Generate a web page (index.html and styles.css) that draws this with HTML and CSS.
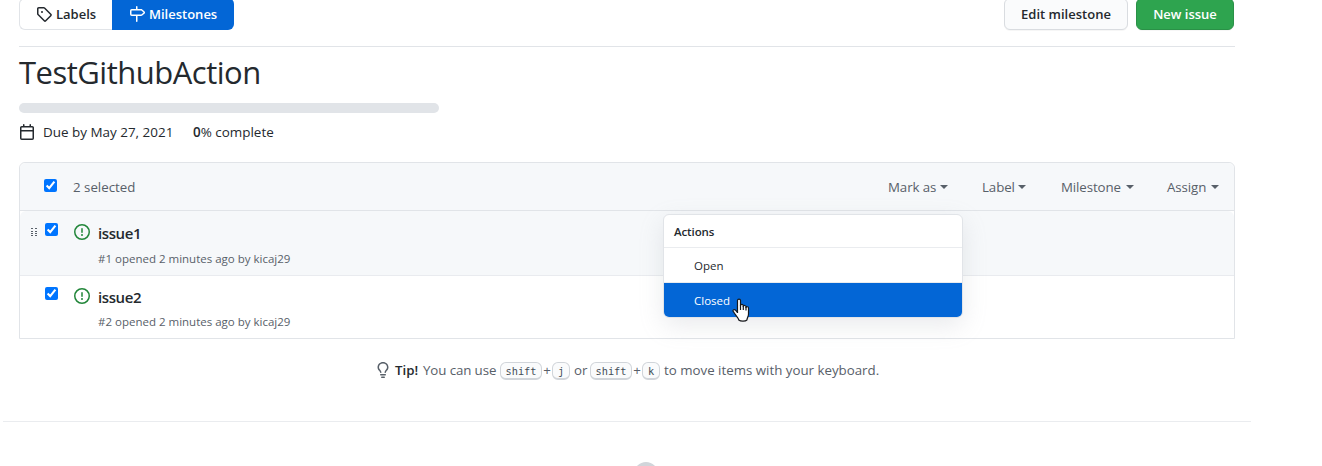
FILE: index.html
```html
<!DOCTYPE html>
<html lang="en">
<head>
<meta charset="utf-8">
<title>TestGithubAction</title>
<link rel="stylesheet" href="styles.css">
</head>
<body>
<main class="content">
  <header class="topbar">
    <nav class="subnav">
      <a class="tab tab-labels"><svg width="16" height="16" viewBox="0 0 16 16"><path fill-rule="evenodd" d="M2.5 7.775V2.75a.25.25 0 01.25-.25h5.025a.25.25 0 01.177.073l6.25 6.25a.25.25 0 010 .354l-5.025 5.025a.25.25 0 01-.354 0l-6.25-6.25a.25.25 0 01-.073-.177zm-1.5 0V2.75C1 1.784 1.784 1 2.75 1h5.025c.464 0 .91.184 1.238.513l6.25 6.25a1.75 1.75 0 010 2.474l-5.026 5.026a1.75 1.75 0 01-2.474 0l-6.25-6.25A1.75 1.75 0 011 7.775zM6 5a1 1 0 100 2 1 1 0 000-2z"/></svg><span>Labels</span></a>
      <a class="tab tab-milestones"><svg width="16" height="16" viewBox="0 0 16 16"><path fill-rule="evenodd" d="M7.75 0a.75.75 0 01.75.75V3h3.634c.414 0 .814.147 1.13.414l2.07 1.75a1.75 1.75 0 010 2.672l-2.07 1.75a1.75 1.75 0 01-1.13.414H8.5v5.25a.75.75 0 11-1.5 0V10H2.75A1.75 1.75 0 011 8.25v-3.500A1.75 1.75 0 012.750 3H7V.75A.75.75 0 017.750 0zm0 8.500h4.384a.25.25 0 00.161-.06l2.070-1.750a.25.25 0 000-.380l-2.070-1.750a.25.25 0 00-.161-.060H2.750a.25.25 0 00-.25.25v3.500c0 .138.112.25.25.25h5z"/></svg><span>Milestones</span></a>
    </nav>
    <div class="actions">
      <button class="btn btn-edit"><span>Edit milestone</span></button>
      <button class="btn btn-new"><span>New issue</span></button>
    </div>
  </header>

  <h1 class="title">TestGithubAction</h1>
  <div class="progress"></div>
  <div class="stats">
    <svg width="16" height="16" viewBox="0 0 16 16"><path fill-rule="evenodd" d="M4.750 0a.75.75 0 01.75.75V2h5V.75a.75.75 0 011.500 0V2h1.250c.966 0 1.750.784 1.750 1.750v10.500A1.750 1.750 0 0113.250 16H2.750A1.750 1.750 0 011 14.250V3.750C1 2.784 1.784 2 2.750 2H4V.75A.75.75 0 014.750 0zm0 3.500h-2a.25.25 0 00-.25.25V6h11V3.750a.25.25 0 00-.25-.25h-8.500zM2.500 7.500v6.750c0 .138.112.25.25.25h10.500a.25.25 0 00.25-.25V7.500h-11z"/></svg>
    <span class="due">Due by May 27, 2021</span>
    <span class="complete"><b>0</b>% complete</span>
  </div>

  <section class="box">
    <div class="box-header">
      <input class="check" type="checkbox" checked>
      <span class="selected">2 selected</span>
      <div class="filters">
        <span class="filter mark">Mark as</span>
        <span class="filter label">Label</span>
        <span class="filter mile">Milestone</span>
        <span class="filter assign">Assign</span>
      </div>
    </div>
    <div class="row row-hover">
      <svg class="grip" width="7" height="10" viewBox="0 0 7 10"><path d="M0 0h2v1H0zM4 0h2v1H4zM0 3h2v1H0zM4 3h2v1H4zM0 5h2v1H0zM4 5h2v1H4zM0 7h2v1H0zM4 7h2v1H4z"/></svg>
      <input class="check" type="checkbox" checked>
      <svg class="open-icon" width="16" height="16" viewBox="0 0 16 16"><path fill-rule="evenodd" d="M8 1.500a6.500 6.500 0 100 13 6.500 6.500 0 000-13zM0 8a8 8 0 1116 0A8 8 0 010 8zm9 3a1 1 0 11-2 0 1 1 0 012 0zm-.25-6.250a.75.75 0 00-1.500 0v3.500a.75.75 0 001.500 0v-3.500z"/></svg>
      <div class="issue"><a class="issue-title">issue1</a><span class="meta">#1 opened 2 minutes ago by kicaj29</span></div>
    </div>
    <div class="row">
      <span class="grip"></span>
      <input class="check" type="checkbox" checked>
      <svg class="open-icon" width="16" height="16" viewBox="0 0 16 16"><path fill-rule="evenodd" d="M8 1.500a6.500 6.500 0 100 13 6.500 6.500 0 000-13zM0 8a8 8 0 1116 0A8 8 0 010 8zm9 3a1 1 0 11-2 0 1 1 0 012 0zm-.25-6.250a.75.75 0 00-1.500 0v3.500a.75.75 0 001.500 0v-3.500z"/></svg>
      <div class="issue"><a class="issue-title">issue2</a><span class="meta">#2 opened 2 minutes ago by kicaj29</span></div>
    </div>
    <div class="menu">
      <div class="menu-title">Actions</div>
      <div class="menu-item">Open</div>
      <div class="menu-item active">Closed</div>
      <svg class="cursor" width="18" height="24" viewBox="0 0 18 24"><path d="M5.500 15V2.500C5.500.7 8.500.7 8.500 2.500V7.500C8.500 6 11.200 6 11.300 7.700V8.500C11.500 7 13.900 7.200 14 8.700V9.500C14.200 8.300 16.500 8.500 16.500 10V16C16.500 18.500 15.300 19.500 14.900 22C13.500 23.500 8.500 23.500 6.800 22C6.300 19.800 4.200 18 3 16L1.200 13.400C.3 11.700 2.400 10.900 3.500 12.200L5.500 14.500"/><path d="M8.500 7v5M11.300 8v4M14 9v3.500"/></svg>
    </div>
  </section>

  <p class="tip">
    <svg width="16" height="16" viewBox="0 0 16 16"><path fill-rule="evenodd" d="M8 1.500c-2.363 0-4 1.690-4 3.750 0 .984.424 1.625.984 2.304l.214.253c.223.264.470.556.673.848.284.411.537.896.621 1.490a.75.75 0 01-1.484.211c-.04-.282-.163-.547-.370-.847a8.695 8.695 0 00-.542-.680c-.084-.1-.173-.205-.268-.320C3.201 7.750 2.500 6.766 2.500 5.250 2.500 2.310 4.863 0 8 0s5.500 2.310 5.500 5.250c0 1.516-.701 2.500-1.328 3.259-.095.115-.184.220-.268.319-.207.245-.383.453-.541.681-.208.300-.330.565-.370.847a.75.75 0 01-1.485-.212c.084-.593.337-1.078.621-1.489.203-.292.450-.584.673-.848.075-.088.147-.173.213-.253.561-.679.985-1.320.985-2.304 0-2.060-1.637-3.750-4-3.750zM6 15.250a.75.75 0 01.75-.75h2.500a.75.75 0 010 1.500h-2.500a.75.75 0 01-.75-.75zM5.750 12a.75.75 0 000 1.500h4.500a.75.75 0 000-1.500h-4.500z"/></svg>
    <strong>Tip!</strong><span class="t-use">You can use</span><kbd class="wide">shift</kbd><span class="plus">+</span><kbd>j</kbd><span class="t-or">or</span><kbd class="wide">shift</kbd><span class="plus">+</span><kbd>k</kbd><span class="t-move">to move items with your keyboard.</span>
  </p>
</main>
<footer class="footer"><div class="mark-circle"></div></footer>
</body>
</html>
```
FILE: styles.css
```css
* { box-sizing: border-box; }
body {
  margin: 0;
  height: 466px;
  overflow: hidden;
  background: #fff;
  color: #24292e;
  font: 13.3px/20px "Open Sans", "Noto Sans", sans-serif;
}
svg { flex: none; fill: currentColor; }
span, a, strong { white-space: nowrap; }
.content { width: 1216px; margin-left: 19px; }
.topbar {
  display: flex;
  justify-content: space-between;
  height: 47px;
  padding-right: 1px;
  border-bottom: 1px solid #e1e4e8;
}
.subnav, .actions { display: flex; margin-top: -2px; height: 32px; }
.subnav, .btn { font-weight: 600; font-size: 13px; }
.tab { display: flex; align-items: center; gap: 4px; padding-left: 16px; }
.tab-labels { width: 93px; border: 1px solid #e1e4e8; border-right: 0; border-radius: 6px 0 0 6px; }
.tab-milestones { width: 122px; padding-left: 17px; gap: 4px; background: #0366d6; color: #fff; border-radius: 0 6px 6px 0; }
.actions { gap: 8px; }
.btn {
  height: 32px;
  padding: 0;
  border: 1px solid #d9dce0;
  border-radius: 6px;
  background: #fafbfc;
  color: #24292e;
  font-family: inherit;
  box-shadow: 0 1px 0 rgba(27, 31, 35, 0.04);
}
.btn-edit { width: 124px; }
.btn-new { width: 98px; background: #2ea44f; border-color: #2a9147; color: #fff; }
.title { margin: 6px 0 0; height: 40px; font-size: 31px; line-height: 39px; font-weight: 400; letter-spacing: -0.5px; }
.progress { width: 420px; height: 10px; margin-top: 10px; border-radius: 6px; background: #e1e4e8; }
.stats { display: flex; align-items: center; height: 20px; margin-top: 9px; font-size: 13.45px; }
.due { margin-left: 8px; width: 150px; }
.complete b { font-weight: 600; }
.box { position: relative; height: 177px; margin-top: 20px; border: 1px solid #e1e4e8; border-radius: 6px 6px 0 0; }
.check { width: 13px; height: 13px; margin: 0; accent-color: #0075ff; flex: none; }
.box-header { display: flex; align-items: center; height: 48px; padding: 0 15px 0 24px; background: #f6f8fa; border-bottom: 1px solid #e1e4e8; border-radius: 6px 6px 0 0; color: #586069; }
.box-header .check { margin-top: -3px; }
.selected { margin-left: 16px; }
.filters { display: flex; margin-left: auto; }
.filter { display: flex; align-items: center; justify-content: space-between; letter-spacing: -0.1px; }
.filter::after { content: ""; border: 4px solid transparent; border-top-color: currentColor; border-bottom: 0; }
.mark { width: 60px; }
.label { width: 44px; margin-left: 34px; }
.mile { width: 73px; margin-left: 35px; }
.assign { width: 52px; margin-left: 33px; }
.row { display: flex; align-items: flex-start; height: 63px; }
.row-hover { height: 65px; background: #f6f8fa; border-bottom: 1px solid #e9ebef; border-radius: 6px 6px 0 0; }
.grip { width: 7px; margin: 17px 7px 0 11px; color: #586069; }
.row .check { margin-top: 12px; }
.row:not(.row-hover) .check { margin-top: 11px; }
.open-icon { margin: 13px 8px 0 16px; color: #22863a; }
.row:not(.row-hover) .open-icon { margin-top: 12px; }
.issue { display: flex; flex-direction: column; padding-top: 10px; }
.row:not(.row-hover) .issue { padding-top: 9px; }
.issue-title { font-size: 15px; line-height: 24px; font-weight: 600; letter-spacing: -0.4px; }
.meta { margin-top: 4px; font-size: 11.5px; line-height: 18px; color: #586069; }
.row-hover .meta { margin-top: 5px; }
.menu { position: absolute; left: 643px; top: 51px; width: 300px; height: 104px; border: 1px solid #e1e4e8; border-radius: 6px; background: #fff; box-shadow: 0 8px 24px rgba(149, 157, 165, 0.2); font-size: 11.5px; }
.menu-title { height: 33px; padding: 0 10px; line-height: 33px; font-weight: 600; letter-spacing: -0.1px; border-bottom: 1px solid #eaecef; }
.menu-item { height: 35px; padding-left: 30px; line-height: 35px; border-bottom: 1px solid #eaecef; }
.active { height: 34px; border: 0; background: #0366d6; color: #fff; border-radius: 0 0 5px 5px; }
.cursor { position: absolute; left: 68px; top: 83px; color: #16181b; fill: #fff; stroke: currentColor; stroke-width: 1.2; stroke-linejoin: round; }
.tip { display: flex; align-items: center; height: 20px; margin: 21px 0 0 356px; color: #586069; }
.tip strong { width: 28px; margin-left: 4px; color: #24292e; font-weight: 600; }
.t-use { width: 77px; letter-spacing: -0.1px; }
.t-or { width: 20px; padding-left: 4px; }
.t-move { margin-left: 4px; }
.plus { width: 10px; text-align: center; }
kbd { width: 18px; height: 18px; margin-top: 2px; border: 1px solid #d1d5da; border-bottom-width: 2px; border-radius: 6px; background: #fafbfc; color: #444d56; font: 10.3px/17px "DejaVu Sans Mono", monospace; text-align: center; }
kbd.wide { width: 42px; }
.footer { width: 1248px; height: 45px; margin: 41px 0 0 3px; border-top: 1px solid #eaecef; overflow: hidden; }
.mark-circle { width: 24px; height: 24px; margin: 40px 0 0 631px; border-radius: 50%; background: #d1d5da; }
```
